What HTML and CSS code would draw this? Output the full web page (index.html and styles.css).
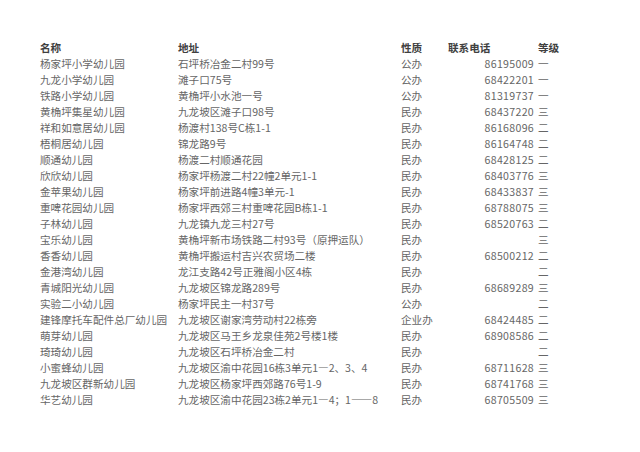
FILE: index.html
```html
<!DOCTYPE html>
<html lang="zh-CN">
<head>
<meta charset="utf-8">
<title>幼儿园名单</title>
<link rel="stylesheet" href="styles.css">
</head>
<body>
<div class="sheet">
  <div class="row head"><span>名称</span><span>地址</span><span>性质</span><span class="tel-h">联系电话</span><span class="lvl">等级</span></div>
  <div class="row"><span>杨家坪小学幼儿园</span><span>石坪桥冶金二村99号</span><span>公办</span><span class="tel">86195009</span><span class="lvl">一</span></div>
  <div class="row"><span>九龙小学幼儿园</span><span>滩子口75号</span><span>公办</span><span class="tel">68422201</span><span class="lvl">一</span></div>
  <div class="row"><span>铁路小学幼儿园</span><span>黄桷坪小水池一号</span><span>公办</span><span class="tel">81319737</span><span class="lvl">一</span></div>
  <div class="row"><span>黄桷坪集星幼儿园</span><span>九龙坡区滩子口98号</span><span>民办</span><span class="tel">68437220</span><span class="lvl">三</span></div>
  <div class="row"><span>祥和如意居幼儿园</span><span>杨渡村138号C栋1-1</span><span>民办</span><span class="tel">86168096</span><span class="lvl">二</span></div>
  <div class="row"><span>梧桐居幼儿园</span><span>锦龙路9号</span><span>民办</span><span class="tel">86164748</span><span class="lvl">二</span></div>
  <div class="row"><span>顺通幼儿园</span><span>杨渡二村顺通花园</span><span>民办</span><span class="tel">68428125</span><span class="lvl">二</span></div>
  <div class="row"><span>欣欣幼儿园</span><span>杨家坪杨渡二村22幢2单元1-1</span><span>民办</span><span class="tel">68403776</span><span class="lvl">三</span></div>
  <div class="row"><span>金苹果幼儿园</span><span>杨家坪前进路4幢3单元-1</span><span>民办</span><span class="tel">68433837</span><span class="lvl">三</span></div>
  <div class="row"><span>重啤花园幼儿园</span><span>杨家坪西郊三村重啤花园B栋1-1</span><span>民办</span><span class="tel">68788075</span><span class="lvl">三</span></div>
  <div class="row"><span>子林幼儿园</span><span>九龙镇九龙三村27号</span><span>民办</span><span class="tel">68520763</span><span class="lvl">二</span></div>
  <div class="row"><span>宝乐幼儿园</span><span>黄桷坪新市场铁路二村93号（原押运队）</span><span>民办</span><span class="tel"></span><span class="lvl">三</span></div>
  <div class="row"><span>香香幼儿园</span><span>黄桷坪搬运村吉兴农贸场二楼</span><span>民办</span><span class="tel">68500212</span><span class="lvl">二</span></div>
  <div class="row"><span>金港湾幼儿园</span><span>龙江支路42号正雅阁小区4栋</span><span>民办</span><span class="tel"></span><span class="lvl">二</span></div>
  <div class="row"><span>青城阳光幼儿园</span><span>九龙坡区锦龙路289号</span><span>民办</span><span class="tel">68689289</span><span class="lvl">三</span></div>
  <div class="row"><span>实验二小幼儿园</span><span>杨家坪民主一村37号</span><span>公办</span><span class="tel"></span><span class="lvl">二</span></div>
  <div class="row"><span>建锋摩托车配件总厂幼儿园</span><span>九龙坡区谢家湾劳动村22栋旁</span><span>企业办</span><span class="tel">68424485</span><span class="lvl">二</span></div>
  <div class="row"><span>萌芽幼儿园</span><span>九龙坡区马王乡龙泉佳苑2号楼1楼</span><span>民办</span><span class="tel">68908586</span><span class="lvl">二</span></div>
  <div class="row"><span>琦琦幼儿园</span><span>九龙坡区石坪桥冶金二村</span><span>民办</span><span class="tel"></span><span class="lvl">二</span></div>
  <div class="row"><span>小蜜蜂幼儿园</span><span>九龙坡区渝中花园16栋3单元1—2、3、4</span><span>民办</span><span class="tel">68711628</span><span class="lvl">三</span></div>
  <div class="row"><span>九龙坡区群新幼儿园</span><span>九龙坡区杨家坪西郊路76号1-9</span><span>民办</span><span class="tel">68741768</span><span class="lvl">三</span></div>
  <div class="row"><span>华艺幼儿园</span><span>九龙坡区渝中花园23栋2单元1—4；1——8</span><span>民办</span><span class="tel">68705509</span><span class="lvl">三</span></div>
</div>
</body>
</html>
```

FILE: styles.css
```css
html, body {
  margin: 0;
  padding: 0;
  background: #ffffff;
}

body {
  font-family: "Noto Sans CJK SC", "Noto Sans", sans-serif;
  font-size: 10.6px;
  color: #666666;
}

.sheet {
  padding: 40px 0 0 40px;
}

.row {
  display: grid;
  grid-template-columns: 138px 223px 47px 86px auto;
  height: 16px;
  line-height: 16px;
  white-space: nowrap;
}

.head {
  color: #404040;
  font-weight: bold;
}

.tel {
  text-align: right;
  letter-spacing: 0.3px;
}

.lvl {
  padding-left: 4px;
}
```
